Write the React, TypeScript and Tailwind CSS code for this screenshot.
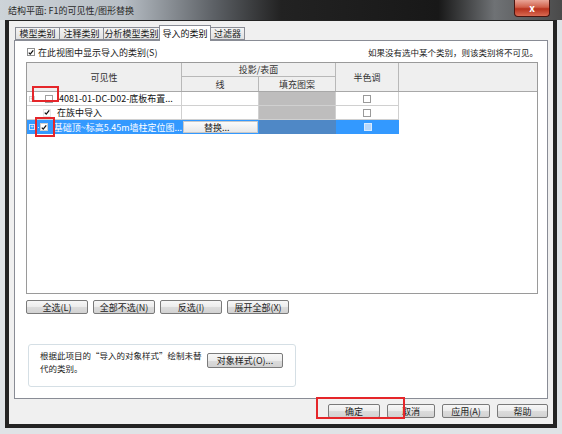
import React from "react";

const FONT = "font-['Noto_Sans_CJK_SC','Noto_Sans',sans-serif]";

function Box({ checked, className = "" }: { checked?: boolean; className?: string }) {
  return (
    <span
      className={`inline-flex w-[8px] h-[8px] shrink-0 items-center justify-center border border-[#8e8f8f] bg-white ${className}`}
    >
      {checked && (
        <svg viewBox="0 0 8 8" className="w-[7px] h-[7px]">
          <path d="M1 4.2 L3 6.2 L7 1.2" stroke="#111" strokeWidth="1.7" fill="none" />
        </svg>
      )}
    </span>
  );
}

function WinButton({ children, className = "" }: { children: React.ReactNode; className?: string }) {
  return (
    <div
      className={`flex items-center justify-center h-[14px] rounded-[2px] border border-[#7a7a7a] bg-[linear-gradient(180deg,#f7f7f7_0%,#ececec_50%,#dcdcdc_51%,#d2d2d2_100%)] text-[9px] leading-none text-[#222] whitespace-nowrap ${className}`}
    >
      {children}
    </div>
  );
}

function Expander({ light }: { light?: boolean }) {
  return (
    <span
      className={`inline-flex w-[6px] h-[6px] shrink-0 items-center justify-center border text-[6px] leading-none ${
        light ? "border-[#cfe3fb] text-white" : "border-[#cfcfcf] text-[#bdbdbd]"
      }`}
    >
      +
    </span>
  );
}

const tabs = ["模型类别", "注释类别", "分析模型类别", "导入的类别", "过滤器"];
const tabWidths = ["w-[44px]", "w-[44px]", "w-[56px]", "w-[52px]", "w-[34px]"];

export default function App() {
  return (
    <div className={`w-[562px] h-[434px] relative overflow-hidden flex flex-col bg-[#dfe3e6] ${FONT}`}>
      {/* title bar */}
      <div className="h-[20px] shrink-0 relative flex items-center pl-[8px] bg-[linear-gradient(90deg,#cdd3d8_0%,#b7bec5_22%,#5d6166_38%,#222_50%,#181818_78%,#6f7275_88%,#4a4a4a_100%)]">
        <span className="text-[9px] leading-none text-[#2a2a2a]">结构平面: F1的可见性/图形替换</span>
        <div className="absolute right-[12px] top-0 w-[36px] h-[17px] rounded-b-[4px] border border-t-0 border-[#4a1510] bg-[linear-gradient(180deg,#e9a597_0%,#d0604a_45%,#b8321d_55%,#d96a52_100%)] flex items-center justify-center">
          <span className="text-[10px] font-bold leading-none text-white">x</span>
        </div>
      </div>

      {/* window body */}
      <div className="flex-1 flex px-[5px] pb-[6px]">
        <div className="flex-1 flex flex-col border-x-[4px] border-b-[4px] border-t border-[#232323] bg-[#f0f0f0]">
          {/* tabs */}
          <div className="mt-[6px] ml-[6px] h-[13px] flex items-end relative z-10">
            {tabs.map((t, i) =>
              i === 3 ? (
                <div
                  key={t}
                  className={`${tabWidths[i]} h-[16px] -mb-px flex items-center justify-center border border-b-0 border-[#898c95] bg-white text-[9px] leading-none text-[#111]`}
                >
                  {t}
                </div>
              ) : (
                <div
                  key={t}
                  className={`${tabWidths[i]} h-[13px] flex items-center justify-center border border-[#898c95] ${
                    i === 4 ? "border-l-0" : "border-r-0"
                  } bg-[linear-gradient(180deg,#f4f4f4,#e1e1e1)] text-[9px] leading-none text-[#222]`}
                >
                  {t}
                </div>
              )
            )}
          </div>

          {/* tab panel */}
          <div className="mx-[5px] h-[359px] border border-[#898c95] bg-white flex flex-col">
            <div className="mt-[6px] h-[10px] pl-[12px] pr-[9px] flex items-center justify-between">
              <div className="flex items-center gap-[3px]">
                <Box checked />
                <span className="text-[9px] leading-none text-[#222]">在此视图中显示导入的类别(S)</span>
              </div>
              <span className="text-[8.5px] leading-none text-[#222]">如果没有选中某个类别，则该类别将不可见。</span>
            </div>

            {/* table */}
            <div className="mt-[5px] ml-[11px] w-[512px] h-[232px] border border-[#9a9a9a] bg-white flex flex-col">
              <div className="grid grid-cols-[155px_77px_77px_63px_1fr] grid-rows-[14px_14px] bg-[#efefef] text-[9px] leading-none text-[#333] border-b border-[#a8a8a8]">
                <div className="row-span-2 border-r border-[#b8b8b8] flex items-center justify-center">可见性</div>
                <div className="col-span-2 border-r border-b border-[#b8b8b8] flex items-center justify-center">投影/表面</div>
                <div className="row-span-2 border-r border-[#b8b8b8] flex items-center justify-center">半色调</div>
                <div className="row-span-2" />
                <div className="border-r border-[#b8b8b8] flex items-center justify-center">线</div>
                <div className="border-r border-[#b8b8b8] flex items-center justify-center">填充图案</div>
              </div>

              {/* row 1 */}
              <div className="grid grid-cols-[155px_77px_77px_63px_1fr] h-[14px] text-[9px] leading-none">
                <div className="border-r border-b border-[#d0d0d0] flex items-center pl-[2px] overflow-hidden whitespace-nowrap">
                  <Expander />
                  <Box className="ml-[10px] border-[#a0a0a0]" />
                  <span className="ml-[6px] text-[#111]">4081-01-DC-D02-底板布置...</span>
                </div>
                <div className="border-r border-b border-[#d0d0d0]" />
                <div className="border-r border-b border-[#d0d0d0] bg-[#bebdbd]" />
                <div className="border-r border-b border-[#d0d0d0] flex items-center justify-center">
                  <Box className="border-[#9a9a9a]" />
                </div>
                <div />
              </div>

              {/* row 2 */}
              <div className="grid grid-cols-[155px_77px_77px_63px_1fr] h-[14px] text-[9px] leading-none">
                <div className="border-r border-b border-[#d0d0d0] flex items-center pl-[16px] overflow-hidden whitespace-nowrap">
                  <Box checked className="border-[#e6e6e6]" />
                  <span className="ml-[6px] text-[#111]">在族中导入</span>
                </div>
                <div className="border-r border-b border-[#d0d0d0]" />
                <div className="border-r border-b border-[#d0d0d0] bg-[#bebdbd]" />
                <div className="border-r border-b border-[#d0d0d0] flex items-center justify-center">
                  <Box className="border-[#9a9a9a]" />
                </div>
                <div />
              </div>

              {/* row 3 (selected) */}
              <div className="grid grid-cols-[155px_77px_77px_63px_1fr] h-[14px] text-[9px] leading-none">
                <div className="bg-[#3399ff] flex items-center pl-[2px] overflow-hidden whitespace-nowrap">
                  <Expander light />
                  <span className="w-[8px] border-t border-dotted border-[#d8eaff]" />
                  <Box checked className="ml-[1px] border-[#d0d0d0]" />
                  <span className="ml-[6px] text-white">基础顶~标高5.45m墙柱定位图...</span>
                </div>
                <div className="bg-[#3399ff] p-px">
                  <div className="h-full border border-[#c9c9c9] bg-[linear-gradient(180deg,#fbfbfb,#e8e8e8)] flex items-center pl-[20px] text-[#222]">
                    替换...
                  </div>
                </div>
                <div className="bg-[#4f88c6]" />
                <div className="bg-[#3399ff] flex items-center justify-center">
                  <span className="w-[8px] h-[8px] border border-[#d9ebff] bg-[#b7d7fb]" />
                </div>
                <div />
              </div>
            </div>

            {/* select buttons */}
            <div className="mt-[6px] ml-[11px] flex gap-[5px]">
              <WinButton className="w-[62px]">全选(L)</WinButton>
              <WinButton className="w-[62px]">全部不选(N)</WinButton>
              <WinButton className="w-[62px]">反选(I)</WinButton>
              <WinButton className="w-[62px]">展开全部(X)</WinButton>
            </div>

            {/* object style group */}
            <div className="mt-[30px] ml-[13px] w-[268px] h-[43px] rounded-[3px] border border-[#d5dfe5] flex items-start pt-[4px] pl-[11px] pr-[12px]">
              <p className="text-[8.5px] leading-[12.5px] text-[#222]">
                根据此项目的“导入的对象样式”绘制未替
                <br />
                代的类别。
              </p>
              <WinButton className="ml-auto mt-[4px] w-[76px] h-[15px]">对象样式(O)...</WinButton>
            </div>
          </div>

          {/* dialog buttons */}
          <div className="mt-[5px] pr-[5px] flex justify-end gap-[7px]">
            <WinButton className="w-[52px] border-[#3c7fb1] bg-[linear-gradient(180deg,#eaf6fd_0%,#d9f0fc_50%,#bee6fd_51%,#a7d9f5_100%)]">确定</WinButton>
            <WinButton className="w-[48px]">取消</WinButton>
            <WinButton className="w-[48px]">应用(A)</WinButton>
            <WinButton className="w-[51px]">帮助</WinButton>
          </div>
        </div>
      </div>

      {/* red annotation boxes */}
      <div className="absolute left-[32px] top-[86px] w-[27px] h-[16px] border-2 border-[#e5262a]" />
      <div className="absolute left-[35px] top-[117px] w-[20px] h-[20px] border-2 border-[#e5262a]" />
      <div className="absolute left-[316px] top-[397px] w-[89px] h-[22px] border-2 border-[#e5262a]" />
    </div>
  );
}
